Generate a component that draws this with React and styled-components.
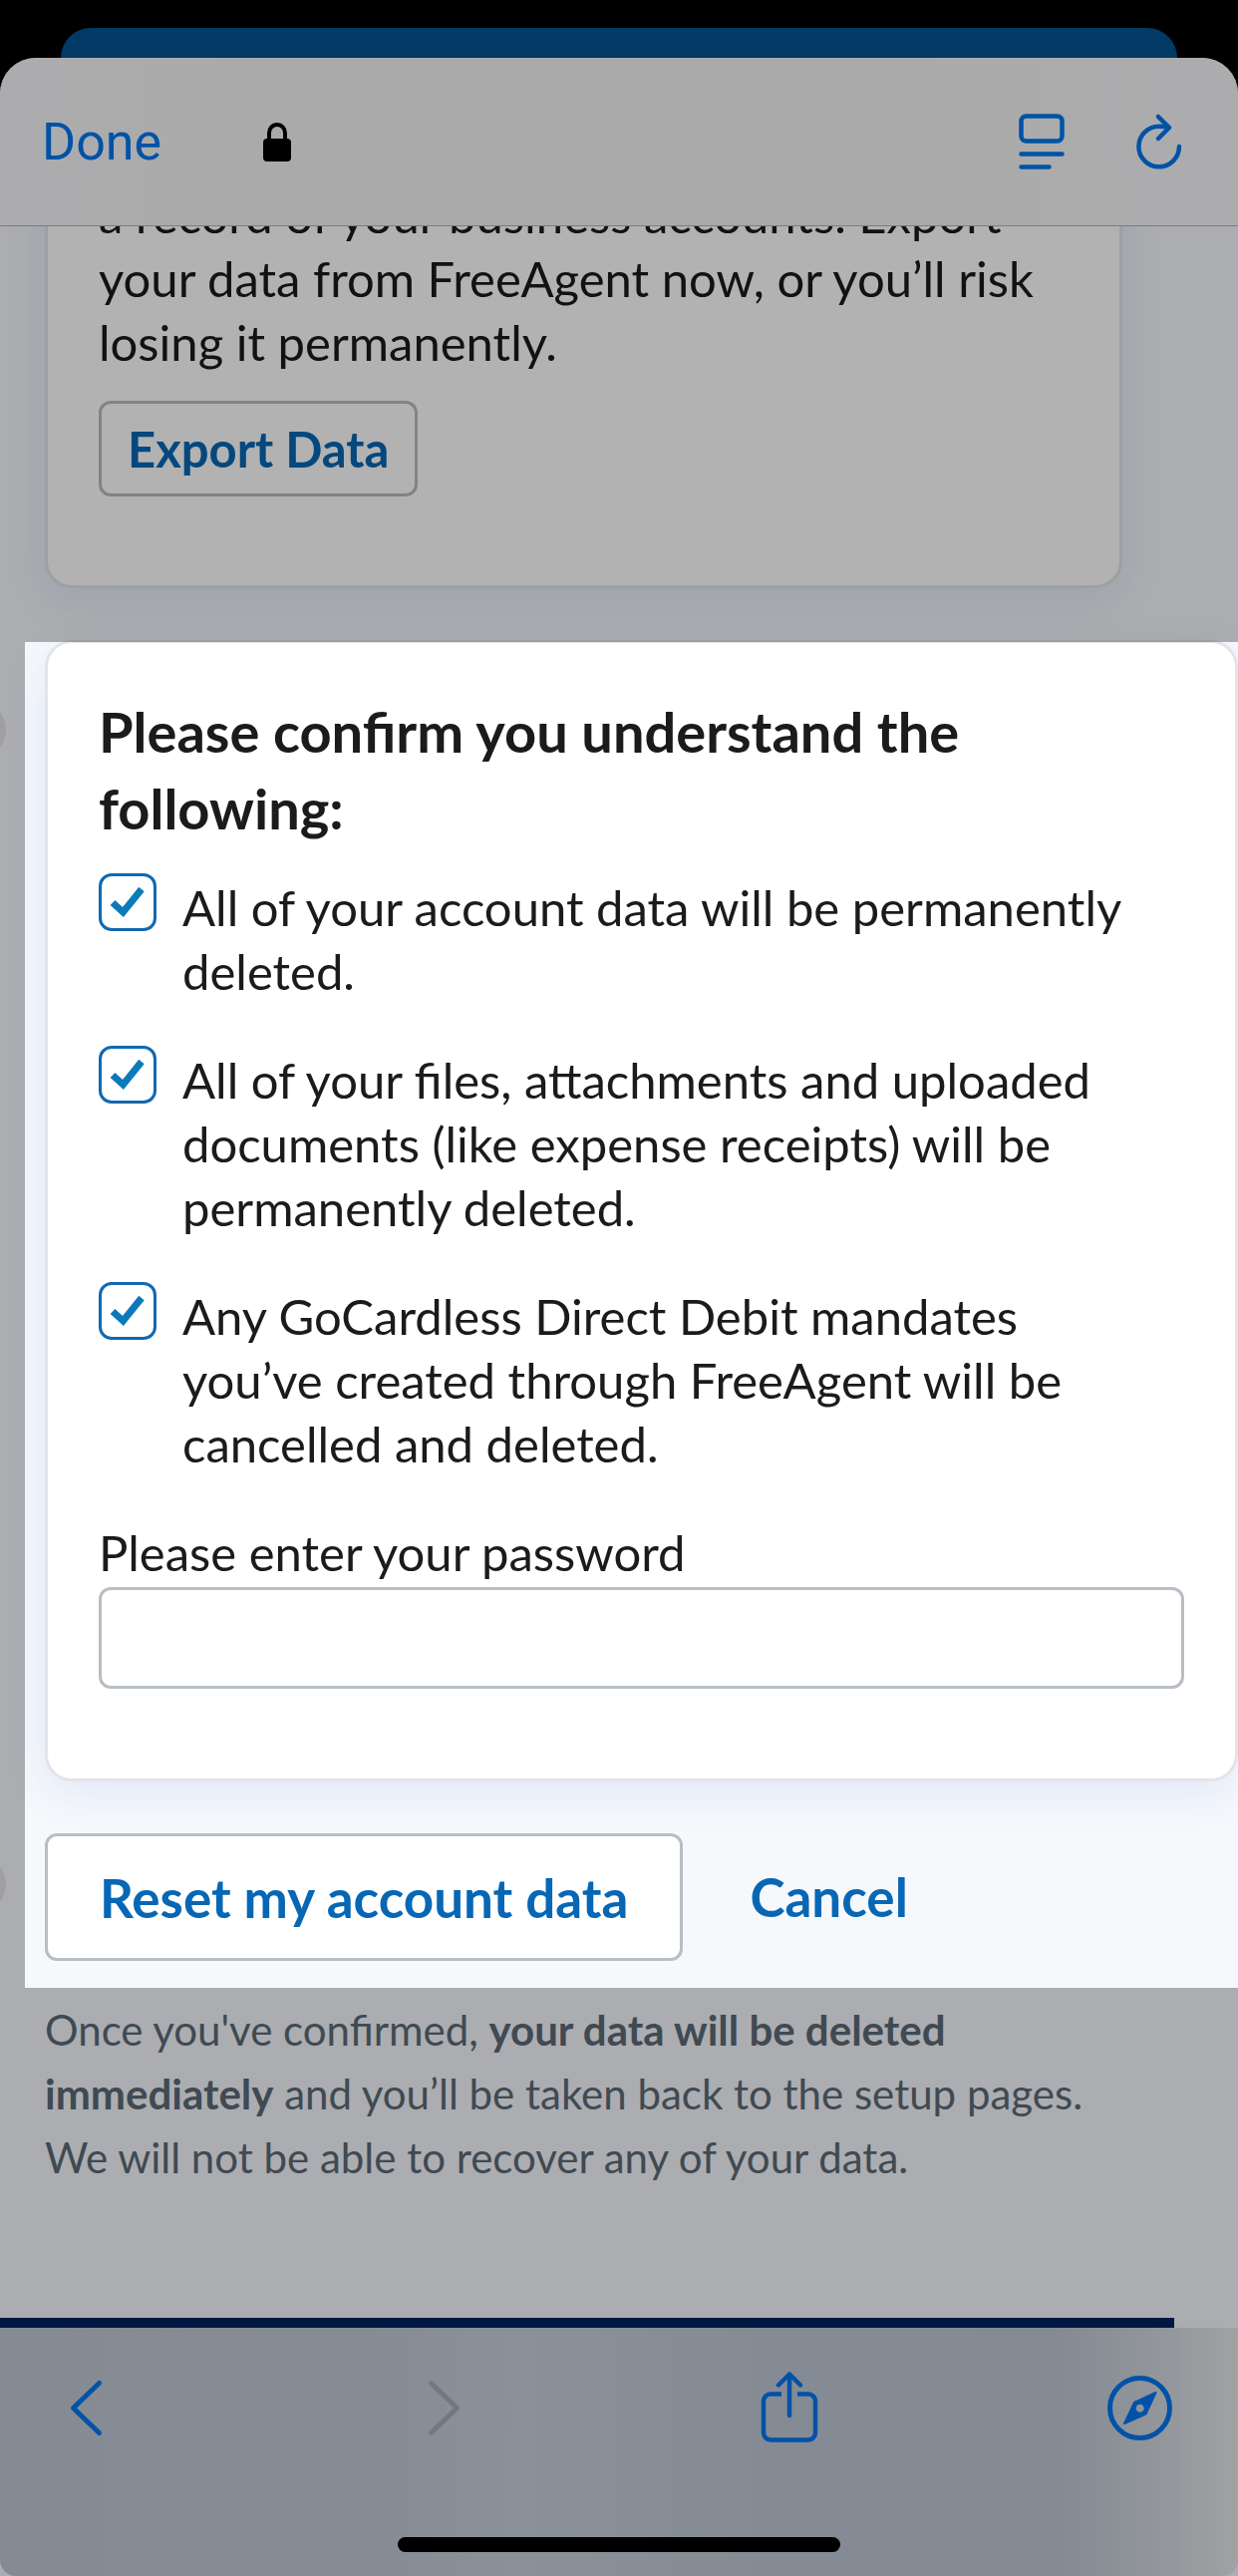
import React, { useState } from "react";
import styled, { createGlobalStyle } from "styled-components";

const statements = [
  "All of your account data will be permanently deleted.",
  "All of your files, attachments and uploaded documents (like expense receipts) will be permanently deleted.",
  "Any GoCardless Direct Debit mandates you’ve created through FreeAgent will be cancelled and deleted.",
];

const LockIcon = () => (
  <svg width="28" height="39" viewBox="0 0 28 39" aria-hidden="true">
    <path d="M6 18V10.500a8 8.500 0 0 1 16 0V18" fill="none" stroke="#000" strokeWidth="4" />
    <rect y="16" width="28" height="23" rx="4" />
  </svg>
);

const ReaderIcon = () => (
  <svg width="46" height="56" viewBox="0 0 46 56" fill="none" stroke="currentColor" strokeWidth="4.500" strokeLinecap="round">
    <rect x="2.500" y="2.500" width="41" height="25" rx="5" />
    <path d="M2.500 40.500h41M2.500 53.500h28" />
  </svg>
);

const ReloadIcon = () => (
  <svg width="46" height="56" viewBox="0 0 46 56" fill="none" stroke="currentColor" strokeWidth="4.500" strokeLinecap="round" strokeLinejoin="round">
    <path d="M43 33a20.300 20.300 0 1 1-20.300-20.300q5 0 9.500 1" />
    <path d="M22 3l11 11-11 11" />
  </svg>
);

const BackIcon = () => (
  <svg width="66" height="72" viewBox="0 0 66 72" fill="none" stroke="currentColor" strokeWidth="5" strokeLinecap="round" strokeLinejoin="round">
    <path d="M45.500 11.500L19.500 36.500l26 25" />
  </svg>
);

const ForwardIcon = () => (
  <svg width="66" height="72" viewBox="0 0 66 72" fill="none" stroke="currentColor" strokeWidth="5" strokeLinecap="round" strokeLinejoin="round">
    <path d="M26.500 11.500l26 25-26 25" />
  </svg>
);

const ShareIcon = () => (
  <svg width="66" height="72" viewBox="0 0 66 72" fill="none" stroke="currentColor" strokeWidth="4.500" strokeLinecap="round" strokeLinejoin="round">
    <path strokeLinecap="butt" d="M25 22.500H14a7 7 0 0 0-7 7v32a7 7 0 0 0 7 7h38a7 7 0 0 0 7-7v-32a7 7 0 0 0-7-7H41" />
    <path d="M33 44V3M22 13.500L33 2.500l11 11" />
  </svg>
);

const CompassIcon = () => (
  <svg width="66" height="72" viewBox="0 0 66 72" aria-hidden="true">
    <circle cx="32.500" cy="36.500" r="30" fill="none" stroke="currentColor" strokeWidth="5" />
    <path
      fill="currentColor"
      stroke="currentColor"
      strokeWidth="2"
      strokeLinejoin="round"
      fillRule="evenodd"
      d="M48.500 21L38.500 42.500 17 52 27 31zM32.700 31.700a5 5 0 1 0 .01 0z"
    />
  </svg>
);

const App = () => {
  const [checked, setChecked] = useState([true, true, true]);
  const [password, setPassword] = useState("");

  const toggle = (index) => {
    setChecked(checked.map((value, i) => (i === index ? !value : value)));
  };

  return (
    <Screen>
      <GlobalStyle />
      <PreviousSheet />
      <Sheet>
        <TopBar>
          <BarGroup $gap={102}>
            <DoneButton>Done</DoneButton>
            <LockIcon />
          </BarGroup>
          <BarGroup $gap={72}>
            <IconButton aria-label="Reader view">
              <ReaderIcon />
            </IconButton>
            <IconButton aria-label="Reload">
              <ReloadIcon />
            </IconButton>
          </BarGroup>
        </TopBar>

        <Content>
          <ExportCard>
            <Text>
              a record of your business accounts. Export your data from FreeAgent now, or you’ll risk losing it
              permanently.
            </Text>
            <ExportButton>Export Data</ExportButton>
          </ExportCard>

          <ConfirmSection>
            <EdgeDot />
            <ConfirmCard>
              <Heading>Please confirm you understand the following:</Heading>
              {statements.map((statement, i) => (
                <CheckRow key={statement}>
                  <CheckBox>
                    <input type="checkbox" checked={checked[i]} onChange={() => toggle(i)} />
                    <svg width="58" height="58" viewBox="0 0 58 58" fill="none" stroke="#0b7ab9" strokeWidth="7">
                      <path d="M14 29.500l10.500 9.500L43 16" />
                    </svg>
                  </CheckBox>
                  <Statement>{statement}</Statement>
                </CheckRow>
              ))}
              <Label htmlFor="password">Please enter your password</Label>
              <PasswordInput
                id="password"
                type="password"
                value={password}
                onChange={(e) => setPassword(e.target.value)}
              />
            </ConfirmCard>
            <Actions>
              <EdgeDot />
              <ResetButton>Reset my account data</ResetButton>
              <CancelLink href="#cancel">Cancel</CancelLink>
            </Actions>
            <Spotlight />
          </ConfirmSection>

          <Note>
            Once you've confirmed, <strong>your data will be deleted immediately</strong> and you’ll be taken back to
            the setup pages. We will not be able to recover any of your data.
          </Note>
          <PageFooter />
        </Content>

        <BottomBar>
          <NavIcons>
            <IconButton aria-label="Back">
              <BackIcon />
            </IconButton>
            <IconButton aria-label="Forward" disabled>
              <ForwardIcon />
            </IconButton>
            <IconButton aria-label="Share">
              <ShareIcon />
            </IconButton>
            <IconButton aria-label="Open in browser">
              <CompassIcon />
            </IconButton>
          </NavIcons>
          <HomeIndicator />
        </BottomBar>
      </Sheet>
    </Screen>
  );
};

export default App;

const GlobalStyle = createGlobalStyle`
  * {
    box-sizing: border-box;
  }
  body {
    margin: 0;
    background-color: #000000;
    color: #1a1b1d;
    font-family: Lato, "Liberation Sans", sans-serif;
    font-size: 49px;
    line-height: 64px;
  }
  button {
    font-family: inherit;
    cursor: pointer;
  }
`;

const Screen = styled.div`
  display: flex;
  flex-direction: column;
  min-height: 100vh;
  padding-top: 28px;
  overflow: hidden;
`;

const PreviousSheet = styled.div`
  height: 30px;
  margin: 0 61px;
  background-color: #005391;
  border-radius: 30px 30px 0 0;
`;

const Sheet = styled.div`
  display: flex;
  flex-direction: column;
  flex: 1;
  background-color: #f6f8fc;
  border-radius: 36px 36px 0 0;
`;

const TopBar = styled.header`
  position: relative;
  z-index: 1;
  display: flex;
  justify-content: space-between;
  align-items: center;
  height: 169px;
  padding: 0 56px 0 42px;
  background: linear-gradient(90deg, #f7f7fb, #f4f4f4 18%, #f4f4f4 75%, #f7f7fb);
  border-bottom: 1px solid #b4b4b8;
  border-radius: 36px 36px 0 0;
`;

const BarGroup = styled.div`
  display: flex;
  align-items: center;
  gap: ${(p) => p.$gap}px;
`;

const IconButton = styled.button`
  display: flex;
  padding: 0;
  border: none;
  background: none;
  color: #0076f0;

  &:disabled {
    color: #a6abb7;
  }
`;

const DoneButton = styled(IconButton)`
  && {
    font-family: Roboto, sans-serif;
  }
  font-size: 52px;
`;

const Content = styled.main`
  flex: 1;
  display: flex;
  flex-direction: column;
`;

const Card = styled.div`
  margin-left: 45px;
  background-color: #ffffff;
  border: 3px solid #e3e4ea;
  border-radius: 27px;
  box-shadow: 0 12px 45px rgba(0, 80, 190, 0.09);
`;

/* scrolled part way under the top bar */
const ExportCard = styled(Card)`
  margin-top: -97px;
  margin-right: 116px;
  margin-bottom: 52px;
  padding: 50px 51px 89px;
`;

const Text = styled.p`
  margin: 0 0 27px;
`;

const OutlineButton = styled.button`
  background-color: #ffffff;
  border: 3px solid #b8bec4;
  border-radius: 12px;
  color: #0767b5;
  font-weight: 700;
`;

const ExportButton = styled(OutlineButton)`
  display: block;
  height: 96px;
  padding: 0 26px;
  font-size: 49px;
`;

const ConfirmSection = styled.section`
  position: relative;
  padding-bottom: 27px;
`;

const ConfirmCard = styled(Card)`
  padding: 50px 51px 90px;
`;

const Heading = styled.h2`
  margin: 0 0 27px;
  padding-right: 40px;
  font-size: 56px;
  font-weight: 700;
  line-height: 77px;
`;

const CheckRow = styled.label`
  display: flex;
  align-items: flex-start;
  gap: 26px;
  margin-bottom: 43px;
  padding-right: 40px;
`;

const Statement = styled.span`
  padding-top: 2px;
`;

const CheckBox = styled.span`
  display: grid;
  flex: none;

  input,
  svg {
    grid-area: 1 / 1;
  }
  input {
    appearance: none;
    width: 58px;
    height: 58px;
    margin: 0;
    background-color: #ffffff;
    border: 3px solid #1268b0;
    border-radius: 13px;
  }
  svg {
    visibility: hidden;
    pointer-events: none;
  }
  input:checked + svg {
    visibility: visible;
  }
`;

const Label = styled.label`
  display: block;
  padding-top: 2px;
  margin-bottom: 3px;
`;

const PasswordInput = styled.input`
  display: block;
  width: 100%;
  height: 102px;
  padding: 0 24px;
  border: 3px solid #b8bec4;
  border-radius: 12px;
  font: inherit;
`;

const Actions = styled.div`
  position: relative;
  display: flex;
  align-items: center;
  gap: 67px;
  margin-top: 52px;
  padding-left: 45px;
`;

const ResetButton = styled(OutlineButton)`
  height: 128px;
  padding: 0 52px;
  font-size: 53px;
`;

const CancelLink = styled.a`
  color: #0767b5;
  font-size: 53px;
  font-weight: 700;
  text-decoration: none;
`;

const EdgeDot = styled.span`
  position: absolute;
  top: 60px;
  left: -54px;
  width: 60px;
  height: 60px;
  border-radius: 50%;
  background-color: #e5e6e9;

  ${Actions} & {
    top: 21px;
  }
`;

/* dims everything around the confirmation area */
const Spotlight = styled.div`
  position: absolute;
  z-index: 2;
  top: 2px;
  right: 0;
  bottom: 0;
  left: 25px;
  box-shadow: 0 0 0 3000px rgba(0, 0, 0, 0.3);
  pointer-events: none;
`;

const Note = styled.p`
  margin: 10px 90px 129px 45px;
  color: #5b6b78;
  font-size: 42px;
`;

const PageFooter = styled.div`
  height: 10px;
  margin-top: auto;
  margin-right: 64px;
  background-color: #002560;
`;

const BottomBar = styled.footer`
  display: flex;
  flex-direction: column;
  align-items: center;
  padding: 44px 0 24px;
  background: linear-gradient(90deg, #bfc8d5, #c1c9d5 30%, #c6d0db 42%, #bfc8d4 62%, #bec6d3 85%, #d0d6dd 93%, #e5e8eb);
  border-radius: 0 0 16px 16px;
`;

const NavIcons = styled.nav`
  align-self: stretch;
  display: flex;
  justify-content: space-between;
  padding: 0 65px 0 54px;
`;

const HomeIndicator = styled.div`
  width: 444px;
  height: 15px;
  margin-top: 94px;
  background-color: #000000;
  border-radius: 8px;
`;
